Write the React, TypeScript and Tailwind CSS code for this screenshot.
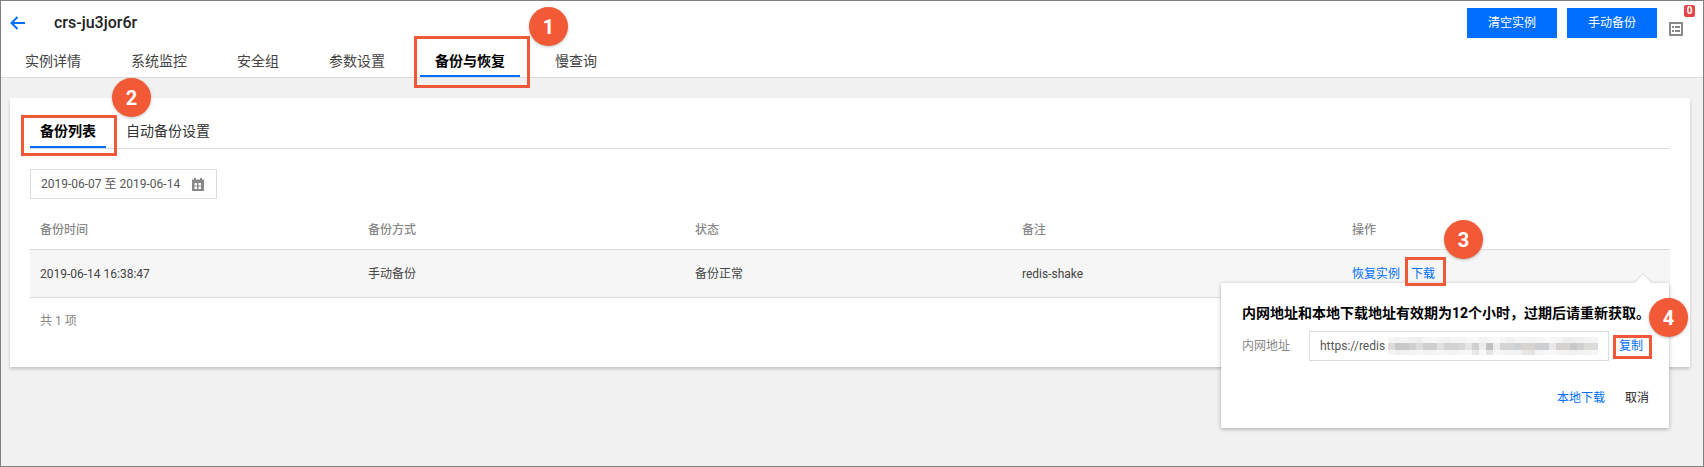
import { ReactNode } from "react";

// blurred part of the address, one column every 7px
const blurTop = [
  "#f8f8f8", "#f6f6f6", "#f2f2f2", "#f4f4f4", "#f0f0f0", "#eeeeee", "#f6f6f6", "#f8f8f8",
  "#f4f4f4", "#f2f2f2", "#f6f6f6", "#f4f4f4", "#f6f6f6", "#f8f8f8", "#f2f2f2", "#f6f6f6",
  "#f8f8f8", "#f4f4f4", "#f0f0f2", "#f4f4f4", "#f6f6f6", "#f2f2f2", "#f6f6f6", "#f8f8f8",
  "#f6f6f6", "#f4f4f4", "#eeeeee", "#eeeeee", "#f0f0f0", "#f4f4f4", "#f6f6f6",
];
const blurMid = [
  "#dedede", "#dcdcdc", "#c8c8c8", "#c8c8c8", "#d0d0d0", "#dcdcdc", "#cfcfcf", "#cfcfcf",
  "#e0e0e0", "#d2d2d2", "#d2d2d2", "#d8d8d8", "#e6e6e6", "#d0d0d0", "#ececec", "#c0c0c0",
  "#ededed", "#d4d4d4", "#d4d4d4", "#cdd0d4", "#d8d4d0", "#d8d4d0", "#cdd0d2", "#cdd0d2",
  "#e8e8e8", "#d6d2d2", "#d6d2d2", "#c8c8c8", "#d0d0d0", "#dcdcda", "#dcdcda",
];
const blurBottom = [
  "#f8f8f8", "#f4f4f4", "#f0f0f0", "#f2f2f2", "#f4f4f4", "#f6f6f6", "#f2f2f2", "#f4f4f4",
  "#f6f6f6", "#f4f4f4", "#f2f2f2", "#f6f6f6", "#f8f8f8", "#e8e8e8", "#f8f8f8", "#e4e4e4",
  "#f6f6f6", "#f4f4f4", "#f2f2f2", "#f4f4f4", "#ece8e6", "#e4e4e0", "#f4f4f4", "#f6f6f6",
  "#f8f8f8", "#f4f4f4", "#f2f2f2", "#f0f0f0", "#f2f2f2", "#f4f4f4", "#f6f6f6",
];

const Step = ({ n, className }: { n: number; className: string }) => (
  <div
    className={`absolute flex h-[39px] w-[39px] items-center justify-center rounded-full bg-[#f25a37] text-[20px] font-bold text-white shadow-[0_1px_3px_rgba(0,0,0,0.25)] ${className}`}
  >
    {n}
  </div>
);

const Mark = ({ className }: { className: string }) => (
  <div className={`absolute border-[3px] border-[#f0583a] ${className}`} />
);

const NavTab = ({ children, active }: { children: ReactNode; active?: boolean }) => (
  <div
    className={`-mx-[15px] h-[32px] px-[15px] leading-[32px] ${
      active ? "border-b-2 border-[#006eff] font-bold text-black" : "text-[#444]"
    }`}
  >
    {children}
  </div>
);

const Cell = ({ children, w }: { children: ReactNode; w: string }) => (
  <div className={`${w} shrink-0 pl-[10px]`}>{children}</div>
);

export default function App() {
  return (
    <div className="relative h-[467px] w-[1704px] overflow-hidden border border-[#808080] bg-[#f1f1f1] font-['Roboto','Noto_Sans_CJK_SC',sans-serif] text-[12px] text-[#333]">
      {/* top bar */}
      <div className="h-[77px] border-b border-[#dcdcdc] bg-white">
        <div className="flex h-[44px] items-center justify-between">
          <div className="flex items-center">
            <svg className="ml-[9px] h-[14px] w-[15px]" viewBox="0 0 15 14" fill="none" stroke="#006eff" strokeWidth="2">
              <path d="M15 7H2M7.5 1 1.5 7l6 6" />
            </svg>
            <span className="ml-[29px] text-[16px] font-medium text-[#222]">crs-ju3jor6r</span>
          </div>
          <div className="relative mr-[46px] flex gap-[10px]">
            <button className="h-[30px] w-[90px] bg-[#006eff] text-white">清空实例</button>
            <button className="h-[30px] w-[90px] bg-[#006eff] text-white">手动备份</button>
          </div>
        </div>
        <div className="flex h-[32px] gap-[50px] pl-[24px] text-[14px]">
          <NavTab>实例详情</NavTab>
          <NavTab>系统监控</NavTab>
          <NavTab>安全组</NavTab>
          <NavTab>参数设置</NavTab>
          <NavTab active>备份与恢复</NavTab>
          <NavTab>慢查询</NavTab>
        </div>
      </div>

      {/* card */}
      <div className="ml-[9px] mt-[20px] h-[269px] w-[1680px] bg-white px-[20px] shadow-[0_2px_3px_rgba(0,0,0,0.2)]">
        <div className="flex h-[51px] w-[1640px] gap-[20px] border-b border-[#dcdcdc] pt-[23px] text-[14px] leading-[20px]">
          <div className="h-[27px] border-b-2 border-[#006eff] px-[10px] font-bold text-black">备份列表</div>
          <div className="text-[#333]">自动备份设置</div>
        </div>
        <div className="mt-[20px] flex h-[30px] w-[187px] items-center justify-between border border-[#dcdcdc] pl-[10px] pr-[12px] text-[#555]">
          <span>2019-06-07 至 2019-06-14</span>
          <svg className="h-[13px] w-[12px]" viewBox="0 0 12 13">
            <path fill="#888" d="M0 1.5h2V0h2v1.5h4V0h2v1.5h2V13H0V1.5Z" />
            <path fill="#fff" d="M2.5 5H5v2.5H2.5V5Zm4 0H9v2.5H6.500V5Zm-4 3.500H5V11H2.500V8.500Zm4 0H9V11H6.500V8.500Z" />
          </svg>
        </div>

        {/* table */}
        <div className="mt-[11px] w-[1640px]">
          <div className="flex h-[40px] items-center border-b border-[#dcdcdc] font-medium text-[#888]">
            <Cell w="w-[328px]">备份时间</Cell>
            <Cell w="w-[327px]">备份方式</Cell>
            <Cell w="w-[327px]">状态</Cell>
            <Cell w="w-[330px]">备注</Cell>
            <Cell w="w-[328px]">操作</Cell>
          </div>
          <div className="flex h-[48px] items-center border-b border-[#dcdcdc] bg-[#f6f6f6] text-[#444]">
            <Cell w="w-[328px]">2019-06-14 16:38:47</Cell>
            <Cell w="w-[327px]">手动备份</Cell>
            <Cell w="w-[327px]">备份正常</Cell>
            <Cell w="w-[330px]">redis-shake</Cell>
            <Cell w="w-[328px]">
              <span className="text-[#006eff]">恢复实例</span>
              <span className="ml-[11px] text-[#006eff]">下载</span>
            </Cell>
          </div>
          <div className="pl-[10px] pt-[14px] text-[#888]">共 1 项</div>
        </div>
      </div>

      {/* notification icon and badge */}
      <svg className="absolute left-[1668px] top-[21px] h-[14px] w-[14px]" viewBox="0 0 14 14" fill="#888">
        <path d="M0 0h14v14H0V0Zm2 2v10h10V2H2Zm1 2h2v2H3V4Zm3 0h5v2H6V4ZM3 8h2v2H3V8Zm3 0h5v2H6V8Z" />
      </svg>
      <div className="absolute left-[1683px] top-[4px] flex h-[12px] w-[11px] items-center justify-center rounded-[2px] bg-[#e54545] text-[10px] font-bold leading-none text-white">
        0
      </div>

      {/* popover */}
      <div className="absolute left-[1220px] top-[282px] h-[145px] w-[448px] bg-white pl-[21px] shadow-[0_1px_4px_rgba(0,0,0,0.3)]">
        <div className="absolute right-[20px] top-[-6px] h-[12px] w-[12px] rotate-45 bg-white shadow-[-1px_-1px_1px_rgba(0,0,0,0.08)]" />
        <div className="relative pt-[20px] text-[14px] font-bold leading-[20px] text-black">
          内网地址和本地下载地址有效期为12个小时，过期后请重新获取。
        </div>
        <div className="relative mt-[8px] flex h-[30px] items-center">
          <span className="w-[67px] text-[#888]">内网地址</span>
          <div className="flex h-[30px] w-[300px] items-center border border-[#dcdcdc] pl-[10px] text-[#555]">
            <span className="shrink-0 whitespace-nowrap">https://redis</span>
            <svg className="ml-auto mr-[10px] h-[18px] w-[210px] shrink-0" viewBox="7 0 210 18" shapeRendering="crispEdges">
              {blurMid.map((c, i) => (
                <g key={i}>
                  <rect x={i * 7} y={0} width={7} height={6} fill={blurTop[i]} />
                  <rect x={i * 7} y={6} width={7} height={7} fill={c} />
                  <rect x={i * 7} y={13} width={7} height={5} fill={blurBottom[i]} />
                </g>
              ))}
            </svg>
          </div>
          <span className="ml-[10px] text-[#006eff]">复制</span>
        </div>
        <div className="relative mt-[28px] flex justify-end gap-[20px] pr-[20px]">
          <span className="text-[#006eff]">本地下载</span>
          <span className="text-[#222]">取消</span>
        </div>
      </div>

      {/* callouts */}
      <Mark className="left-[413px] top-[35px] h-[52px] w-[116px]" />
      <Mark className="left-[20px] top-[114px] h-[41px] w-[96px]" />
      <Mark className="left-[1404px] top-[256px] h-[29px] w-[41px]" />
      <Mark className="left-[1612px] top-[334px] h-[24px] w-[39px]" />
      <Step n={1} className="left-[528px] top-[6px]" />
      <Step n={2} className="left-[111px] top-[77px]" />
      <Step n={3} className="left-[1443px] top-[219px]" />
      <Step n={4} className="left-[1648px] top-[297px]" />
    </div>
  );
}
